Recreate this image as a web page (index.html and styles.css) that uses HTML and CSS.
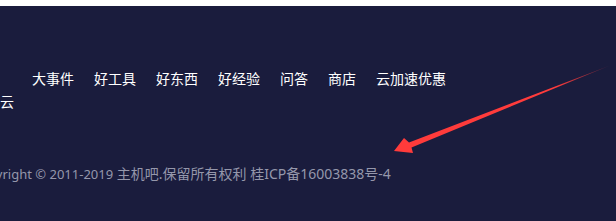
FILE: index.html
```html
<!DOCTYPE html>
<html lang="zh-CN">
<head>
<meta charset="utf-8">
<title>footer</title>
<link rel="stylesheet" href="styles.css">
</head>
<body>
<div class="topbar"></div>
<footer class="footer">
  <nav class="nav">
    <a class="nav-item">大事件</a>
    <a class="nav-item">好工具</a>
    <a class="nav-item">好东西</a>
    <a class="nav-item">好经验</a>
    <a class="nav-item">问答</a>
    <a class="nav-item">商店</a>
    <a class="nav-item">云加速优惠</a>
  </nav>
  <div class="nav-wrap">云</div>
  <p class="copyright"><span class="en">Copyright © 2011-2019</span> 主机吧.保留所有权利 桂ICP备16003838号-4</p>
  <svg class="arrow" width="616" height="221" viewBox="0 0 616 221">
    <defs>
      <linearGradient id="fade" x1="610" y1="65" x2="394" y2="151" gradientUnits="userSpaceOnUse">
        <stop offset="0" stop-color="#ff3b3b" stop-opacity="0.2"/>
        <stop offset="0.25" stop-color="#ff3b3b" stop-opacity="1"/>
        <stop offset="1" stop-color="#ff3b3b"/>
      </linearGradient>
    </defs>
    <polygon points="394,151 404,138 409,142.6 610,65.5 411.5,147.5 413,153" fill="url(#fade)"/>
  </svg>
</footer>
</body>
</html>
```
FILE: styles.css
```css
html, body {
  margin: 0;
  padding: 0;
  background: #1a1c3d;
  overflow: hidden;
}
body {
  width: 616px;
  height: 221px;
  font-family: "Noto Sans", "Noto Sans CJK SC", sans-serif;
}
.topbar {
  height: 6px;
  background: #ffffff;
}
.footer {
  height: 215px;
  background: #1a1c3d;
  padding-top: 63px;
  box-sizing: border-box;
}
.nav {
  display: flex;
  gap: 20px;
  padding-left: 32px;
  font-size: 14px;
  line-height: 20px;
}
.nav-item {
  color: #ffffff;
}
.nav-wrap {
  color: #ffffff;
  font-size: 14px;
  line-height: 20px;
  margin-top: 3px;
}
.copyright {
  margin: 52px 0 0 -28px;
  color: #9597ab;
  font-size: 14px;
  line-height: 20px;
  white-space: nowrap;
}
.copyright .en {
  font-size: 13px;
}
.arrow {
  position: absolute;
  left: 0;
  top: 0;
}
```
